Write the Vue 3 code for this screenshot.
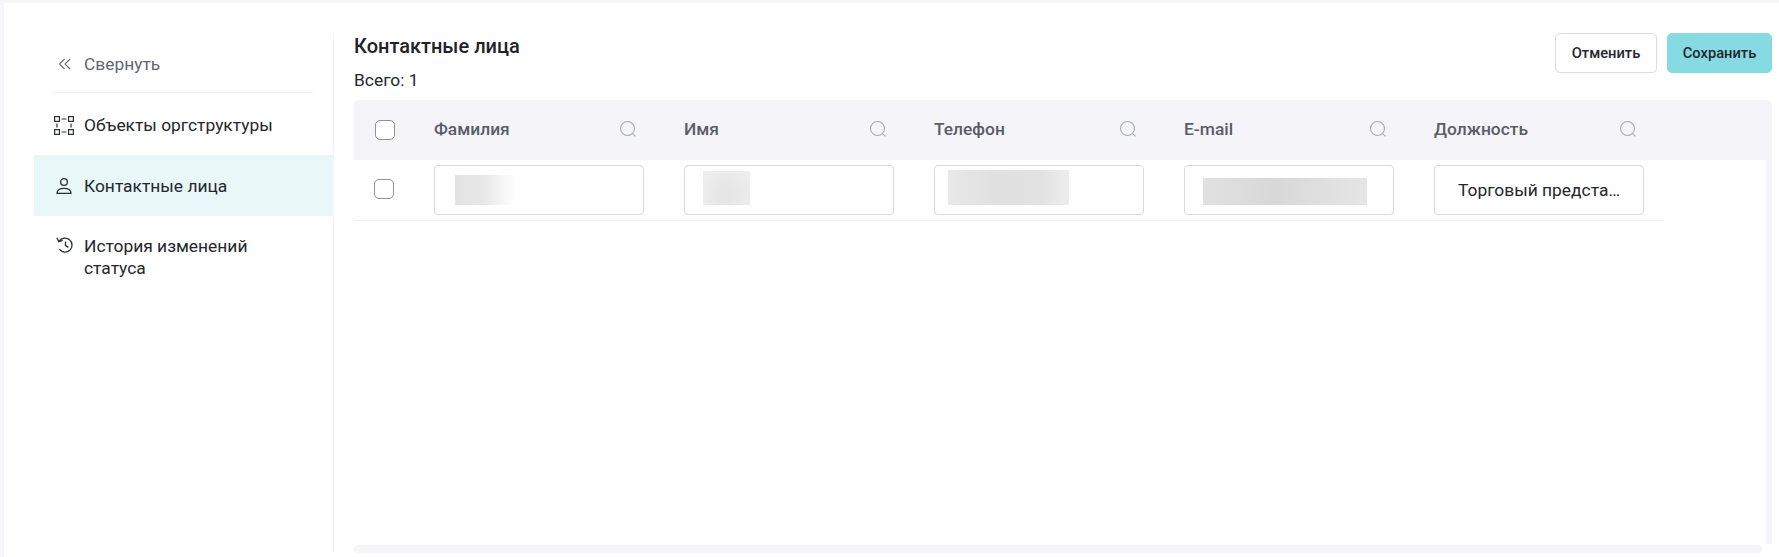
<template>
  <div class="page">
    <div class="card">
      <aside class="side">
        <div class="collapse">
          <svg class="ico" viewBox="0 0 20 20" fill="none" stroke="#6b6e78" stroke-width="1.1">
            <path d="M10.5 5 L5.5 10 L10.5 15" />
            <path d="M16 5 L11 10 L16 15" />
          </svg>
          <span>Свернуть</span>
        </div>
        <div class="side-line"></div>
        <div class="nav-item">
          <svg class="ico" viewBox="0 0 20 20" fill="none" stroke="#2b2e36" stroke-width="1.2">
            <rect x="0.6" y="1.6" width="4.8" height="4.8" />
            <rect x="14.6" y="1.6" width="4.8" height="4.8" />
            <rect x="0.6" y="14.6" width="4.8" height="4.8" />
            <rect x="14.6" y="14.6" width="4.8" height="4.8" />
            <path d="M7.5 4 H12.5 M7.5 17 H12.5 M3 8.5 V12.5 M17 8.5 V12.5" />
          </svg>
          <span>Объекты оргструктуры</span>
        </div>
        <div class="nav-item active">
          <svg class="ico" viewBox="0 0 20 20" fill="none" stroke="#2b2e36" stroke-width="1.3">
            <circle cx="10" cy="6" r="3.4" />
            <path d="M3 17.4 C3 13.8 6 12.4 10 12.4 C14 12.4 17 13.8 17 17.4 Z" />
          </svg>
          <span>Контактные лица</span>
        </div>
        <div class="nav-item top">
          <svg class="ico" viewBox="0 0 20 20" fill="none" stroke="#2b2e36" stroke-width="1.3">
            <path d="M5.2 6.2 A7 7 0 1 1 5.4 14.2" />
            <path d="M2.8 2.8 L4.8 6.6 L8.6 5.4" />
            <path d="M11.5 6.4 V10.6 L14.4 12.4" />
          </svg>
          <span>История изменений<br />статуса</span>
        </div>
      </aside>

      <main class="main">
        <div class="head">
          <div>
            <div class="title">Контактные лица</div>
            <div class="total">Всего: 1</div>
          </div>
          <div class="actions">
            <button class="btn">Отменить</button>
            <button class="btn primary">Сохранить</button>
          </div>
        </div>

        <div class="table-wrap">
          <div class="table-inner">
            <div class="thead">
              <div class="check-col"><span class="check"></span></div>
              <div v-for="c in columns" :key="c" class="th">
                <span>{{ c }}</span>
                <svg class="search" viewBox="0 0 18 18" fill="none" stroke="#a9abb3" stroke-width="1.1">
                  <circle cx="8.5" cy="8.5" r="7" />
                  <path d="M13.6 13.6 L16.4 16.4" />
                </svg>
              </div>
            </div>
            <div class="tbody">
              <div class="tr">
                <div class="check-col row-check"><span class="check"></span></div>
                <div v-for="cell in cells" :key="cell.id" class="td">
                  <div class="field">
                    <span v-if="cell.text" class="field-text">{{ cell.text }}</span>
                    <span v-else class="blur" :class="cell.id"></span>
                  </div>
                </div>
              </div>
            </div>
          </div>
          <div class="vbar"></div>
          <div class="hbar"></div>
        </div>
      </main>
    </div>
  </div>
</template>

<script setup>
const columns = ['Фамилия', 'Имя', 'Телефон', 'E-mail', 'Должность']
const cells = [
  { id: 'b1' },
  { id: 'b2' },
  { id: 'b3' },
  { id: 'b4' },
  { id: 'b5', text: 'Торговый представитель' }
]
</script>

<style>
html, body { margin: 0; background: #fff; }
</style>

<style scoped>
.page {
  width: 1779px; height: 557px; overflow: hidden; box-sizing: border-box;
  padding: 3px 0 0 4px; background: #fff;
  font-family: Roboto, "Liberation Sans", sans-serif; color: #23262d;
  box-shadow: inset 4px 3px 0 #f5f5fa;
}
.card {
  display: flex; height: 554px; padding: 30px 7px 4px 30px; box-sizing: border-box;
  background: #fff; border-radius: 8px 0 0 0;
}
.side {
  width: 300px; flex: none; box-sizing: border-box;
  border-right: 1px solid #f5f5f9;
}
.collapse {
  display: flex; align-items: center; gap: 10px;
  padding: 2px 20px 0; height: 59px; box-sizing: border-box; font-size: 17.4px; color: #62656f;
}
.ico { width: 20px; height: 20px; flex: none; }
.side-line { height: 1px; background: #efeff3; margin: 0 20px 0 18px; }
.nav-item {
  display: flex; align-items: center; gap: 10px; box-sizing: border-box;
  height: 62px; padding: 2px 20px 0 20px; font-size: 17.4px; line-height: 22px; color: #23262d;
}
.nav-item.active { background: #e9f7f9; height: 61px; padding-top: 0; }
.nav-item.top { align-items: flex-start; padding-top: 19px; height: auto; }
.main { flex: 1; min-width: 0; padding-left: 20px; display: flex; flex-direction: column; }
.head { display: flex; justify-content: space-between; height: 67px; }
.title { font-size: 20px; font-weight: 500; line-height: 24px; margin-top: 1px; color: #1f2229; }
.total { font-size: 17.4px; line-height: 22px; margin-top: 11px; }
.actions { display: flex; gap: 10px; align-items: flex-start; }
.btn {
  height: 40px; width: 102px; padding: 0; box-sizing: border-box; margin: 0;
  border: 1px solid #dcdce2; border-radius: 5px; background: #fff;
  font-family: inherit; font-size: 14.7px; font-weight: 500; color: #23262d;
}
.btn.primary { width: 105px; background: #85dbe1; border-color: #85dbe1; }
.table-wrap { position: relative; flex: 1; min-height: 0; }
.table-inner { height: 100%; }
.thead {
  display: flex; height: 60px; background: #f4f4f9; border-radius: 5px 5px 0 0;
}
.check-col { width: 60px; flex: none; padding-left: 21px; box-sizing: border-box; display: flex; align-items: center; }
.row-check { padding-left: 20px; padding-bottom: 2px; }
.check {
  width: 20px; height: 20px; box-sizing: border-box;
  border: 1px solid #8f9199; border-radius: 5px; background: #fff;
}
.th {
  width: 250px; flex: none; box-sizing: border-box; padding: 0 10px 2px 20px;
  display: flex; align-items: center; justify-content: space-between;
  font-size: 17.4px; font-weight: 500; color: #5a5c68;
}
.search { width: 18px; height: 18px; margin-right: 17px; }
.tr { display: flex; width: 1310px; height: 61px; box-sizing: border-box; border-bottom: 1px solid #f3f3f6; }
.td { width: 250px; flex: none; box-sizing: border-box; padding: 5px 20px 0 20px; }
.field {
  width: 210px; height: 50px; box-sizing: border-box;
  border: 1px solid #d9d9de; border-radius: 4px; background: #fff;
  display: flex; align-items: flex-start; overflow: hidden;
}
.field-text {
  font-size: 17.4px; line-height: 48px; white-space: nowrap; overflow: hidden;
  text-overflow: ellipsis; padding: 0 18px 0 23px;
}
.blur { display: block; flex: none; }
.b1 { width: 60px; height: 30px; margin: 9px 0 0 20px; background: linear-gradient(90deg, #e3e3e3, #e8e8e8 50%, #fff); }
.b2 { width: 47px; height: 34px; margin: 5px 0 0 18px; background: radial-gradient(ellipse at 50% 70%, #e4e4e4, #efefef); }
.b3 { width: 121px; height: 35px; margin: 4px 0 0 13px; background: linear-gradient(90deg, #e9e9e9, #e0e0e0 40%, #e2e2e2 75%, #ededed); }
.b4 { width: 164px; height: 27px; margin: 12px 0 0 18px; background: linear-gradient(90deg, #e1e1e1, #d8d8d8 45%, #e6e6e6); }
.vbar {
  position: absolute; right: 0; top: 60px; bottom: 9px; width: 6px; background: #f4f4fa;
}
.hbar {
  position: absolute; left: 0; right: 10px; bottom: 0; height: 8px;
  background: #f4f4f9; border-radius: 4px;
}
</style>
